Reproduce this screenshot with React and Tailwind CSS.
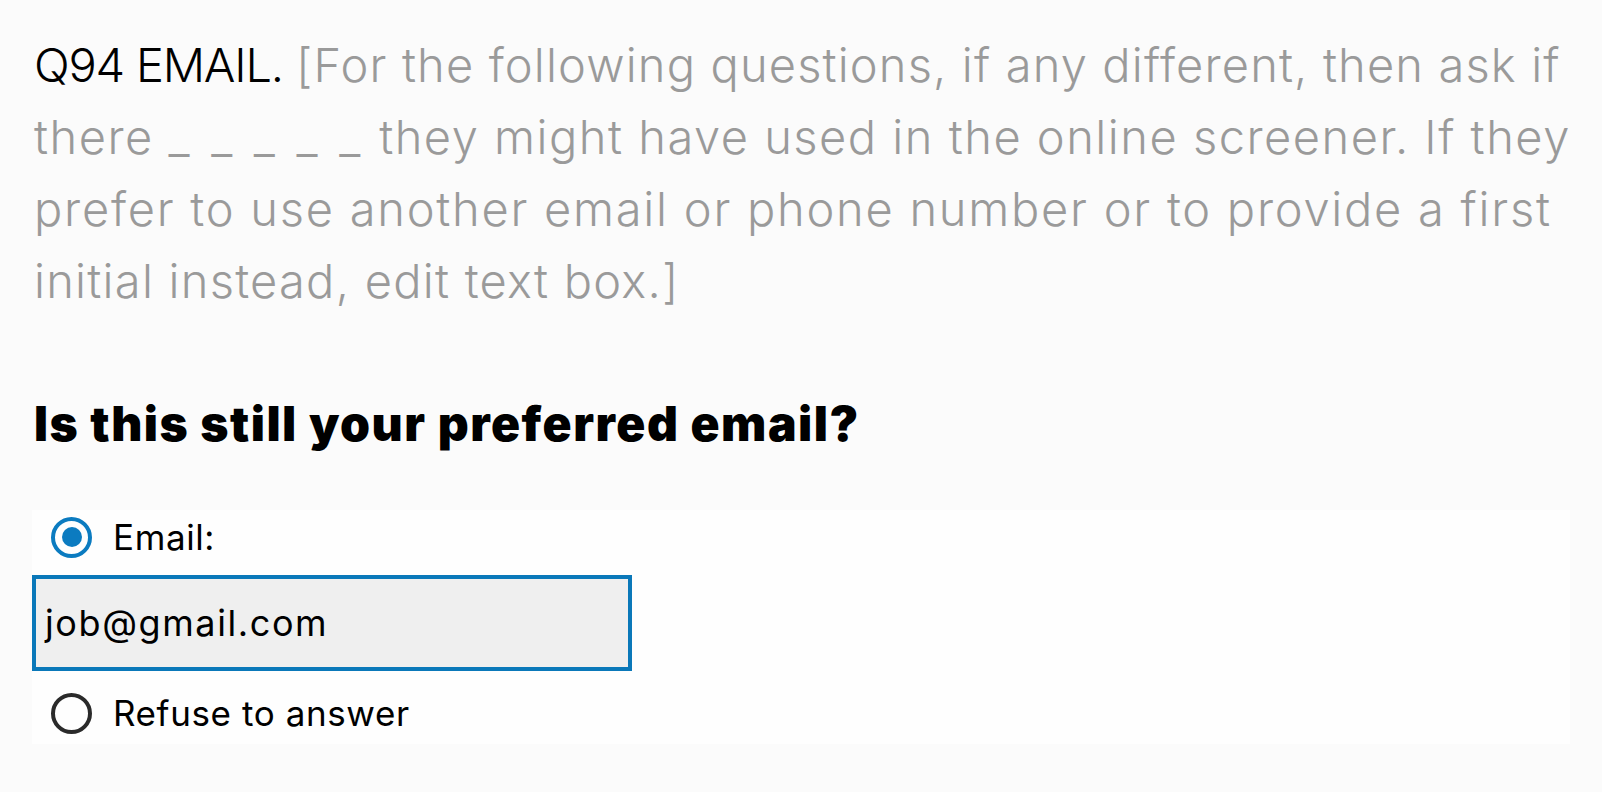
export default function App() {
  const font = { fontFamily: "Inter, 'Liberation Sans', sans-serif" };
  return (
    <div className="min-h-screen w-full bg-[#fbfbfb] pt-[29px]" style={font}>
      <div className="pl-[34px]">
        <p className="whitespace-nowrap text-[47px] leading-[72px] font-light text-[#9a9a9a]">
          <span className="tracking-[-1.2px] text-black">Q94 EMAIL.</span>{" "}
          <span className="tracking-[1.15px]">[For the following questions, if any different, then ask if</span>
          <br />
          <span className="tracking-[1.5px]">
            there <span className="tracking-[4.2px]">_ _ _ _ _</span> they might have used in the online screener. If they
          </span>
          <br />
          <span className="tracking-[1.75px]">prefer to use another email or phone number or to provide a first</span>
          <br />
          <span className="tracking-[1.25px]">initial instead, edit text box.]</span>
        </p>
        <h2 className="mt-[79px] whitespace-nowrap text-[48px] leading-[56px] font-black tracking-[1.5px] text-black">
          Is this still your preferred email?
        </h2>
      </div>
      <div className="mt-[58px] ml-[32px] mr-[32px] bg-[#fefefe] pb-[2px]">
        <label className="flex h-[54px] items-center pl-[19px]">
          <span className="flex h-[41px] w-[41px] items-center justify-center rounded-full border-[4px] border-[#0b7bc0]">
            <span className="h-[20px] w-[20px] rounded-full bg-[#0b7bc0]" />
          </span>
          <span className="ml-[21px] text-[35px] tracking-[0.6px] text-black">Email:</span>
        </label>
        <div className="mt-[11px] flex h-[96px] w-[600px] items-center border-[4px] border-[#0a78b9] bg-[#efefef] pl-[9px] text-[36px] tracking-[1.6px] text-black">
          job@gmail.com
        </div>
        <label className="mt-[13px] flex h-[58px] items-center pl-[19px]">
          <span className="h-[41px] w-[41px] rounded-full border-[4px] border-[#2a2a2a]" />
          <span className="ml-[21px] text-[35px] tracking-[0.6px] text-black">Refuse to answer</span>
        </label>
      </div>
    </div>
  );
}
